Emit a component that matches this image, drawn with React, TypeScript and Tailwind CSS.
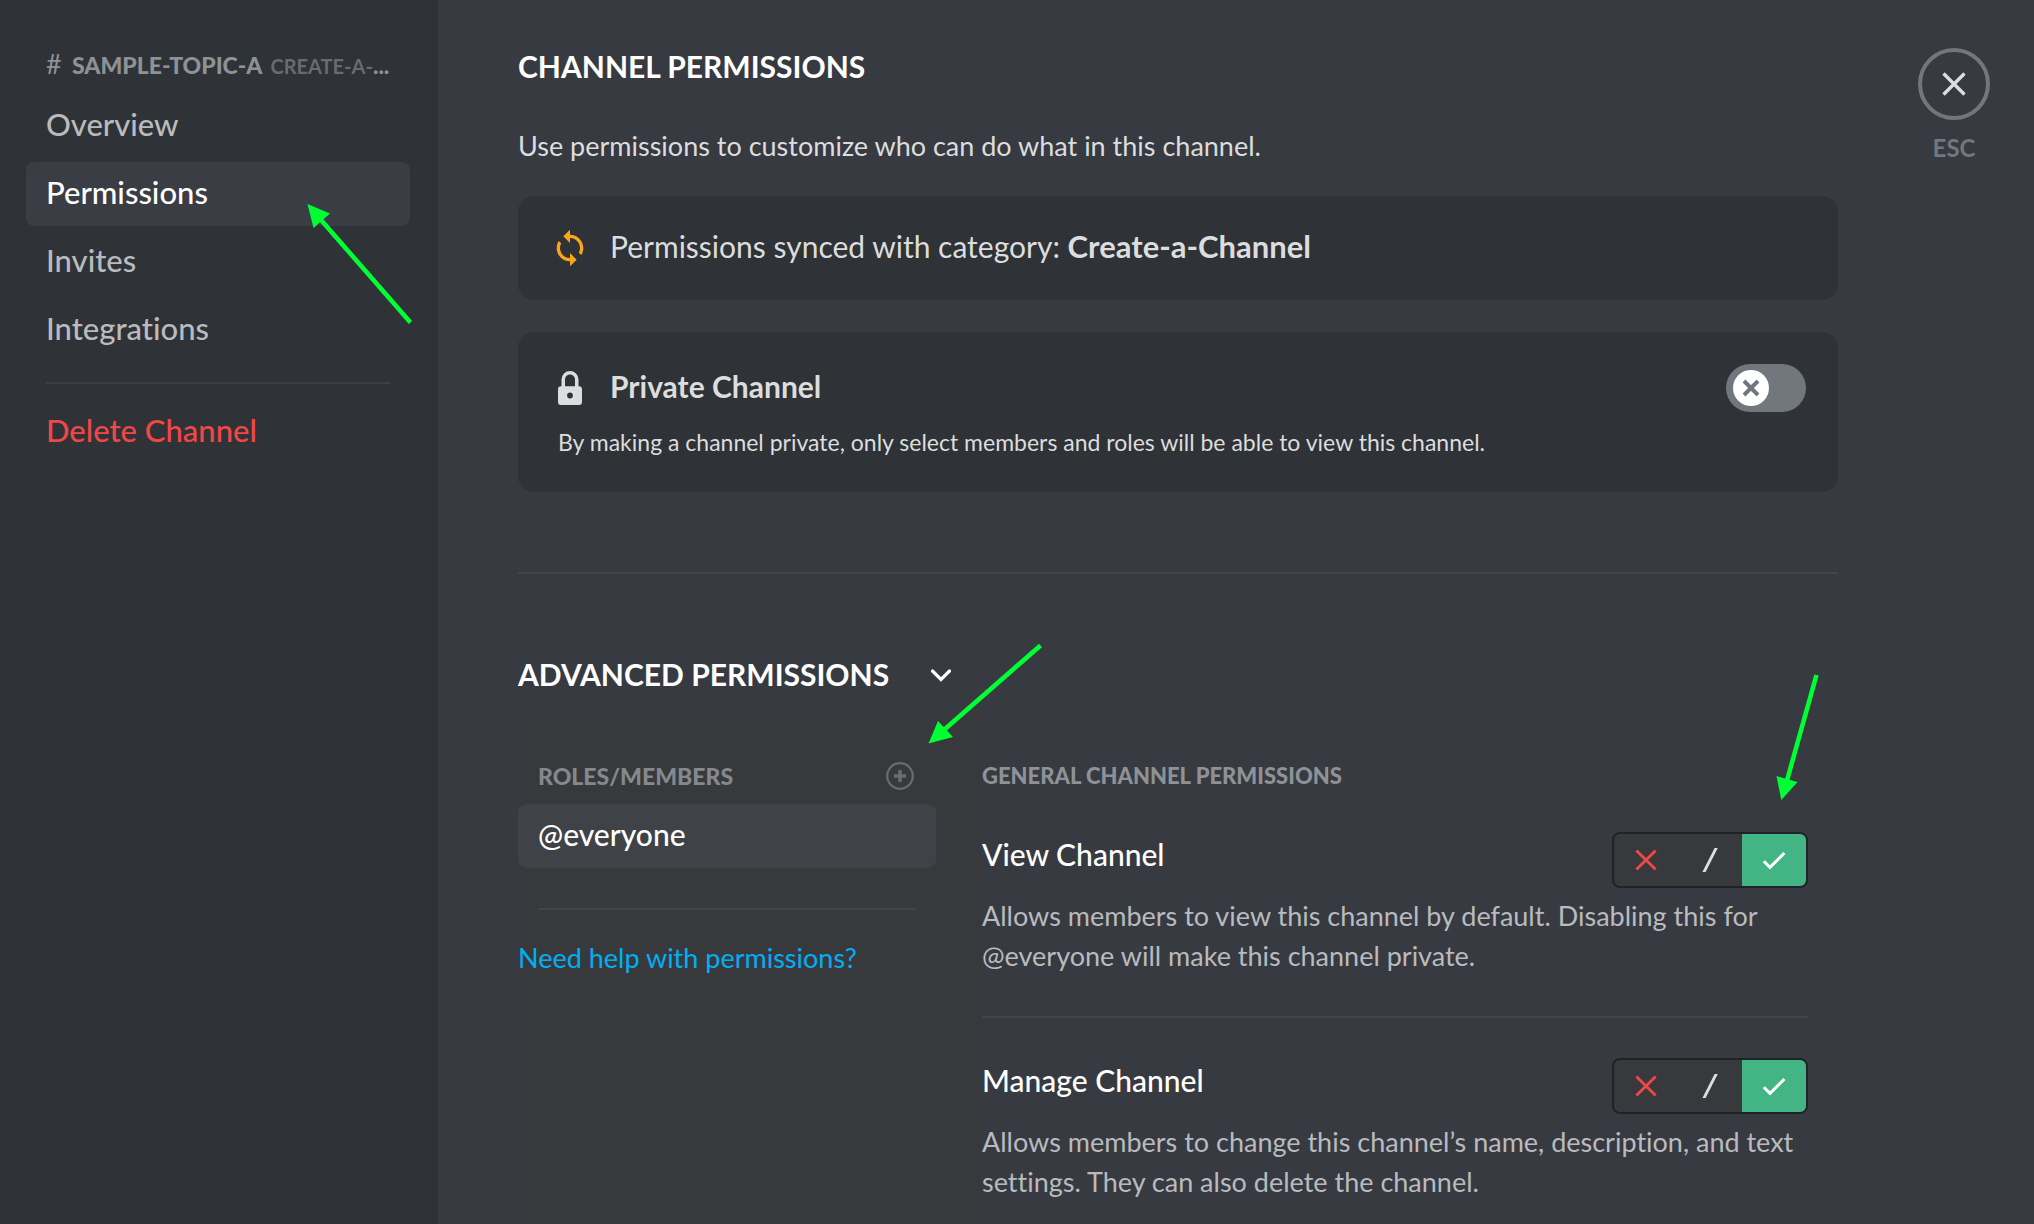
import { useState } from "react";

type Setting = "deny" | "inherit" | "allow";

const navItems = ["Overview", "Permissions", "Invites", "Integrations"];

const permissions = [
  {
    id: "view-channel",
    name: "View Channel",
    description:
      "Allows members to view this channel by default. Disabling this for @everyone will make this channel private.",
  },
  {
    id: "manage-channel",
    name: "Manage Channel",
    description:
      "Allows members to change this channel’s name, description, and text settings. They can also delete the channel.",
  },
];

function SyncIcon() {
  return (
    <svg viewBox="0 0 24 24" className="size-10 shrink-0 text-[#faa61a]" fill="currentColor" aria-hidden="true">
      <path d="M12 4V1L8 5l4 4V6c3.31 0 6 2.69 6 6 0 1.01-.25 1.97-.7 2.8l1.46 1.46C19.54 15.03 20 13.57 20 12c0-4.42-3.58-8-8-8zm0 14c-3.31 0-6-2.69-6-6 0-1.01.25-1.97.7-2.8L5.24 7.74C4.46 8.97 4 10.43 4 12c0 4.42 3.58 8 8 8v3l4-4-4-4v3z" />
    </svg>
  );
}

function LockIcon() {
  return (
    <svg viewBox="0 0 24 34" className="h-[34px] w-6 text-[#dcddde]" fill="currentColor" aria-hidden="true">
      <path
        fillRule="evenodd"
        d="M3.5 15.2V8.5a8.5 8.5 0 0 1 17 0v6.7h.5a3 3 0 0 1 3 3V31a3 3 0 0 1-3 3H3a3 3 0 0 1-3-3V18.2a3 3 0 0 1 3-3ZM7 15.2h10V8.5a5 5 0 0 0-10 0ZM12 21.6a2.9 2.9 0 1 0 0 5.8 2.9 2.9 0 0 0 0-5.8Z"
      />
    </svg>
  );
}

function CrossIcon({ className }: { className: string }) {
  return (
    <svg viewBox="0 0 24 24" className={className} fill="none" stroke="currentColor" strokeWidth="3.4" aria-hidden="true">
      <path d="M1.5 1.5 22.5 22.5M22.5 1.5 1.5 22.5" />
    </svg>
  );
}

function PermissionSwitch({ id, name }: { id: string; name: string }) {
  const [value, setValue] = useState<Setting>("allow");
  const options: { key: Setting; label: string; tone: string; active: string }[] = [
    { key: "deny", label: "Deny", tone: "text-[#f04747]", active: "bg-[#f04747] text-white" },
    { key: "inherit", label: "Inherit", tone: "text-[#dcddde]", active: "bg-[#72767d] text-white" },
    { key: "allow", label: "Allow", tone: "text-[#43b581]", active: "bg-[#43b484] text-white" },
  ];
  return (
    <div
      role="radiogroup"
      aria-label={name}
      className="flex h-14 w-49 shrink-0 overflow-hidden rounded-lg border-2 border-[#212226] bg-[#38393d]"
    >
      {options.map((o) => (
        <label
          key={o.key}
          className={`relative flex flex-1 cursor-pointer items-center justify-center ${value === o.key ? o.active : o.tone}`}
        >
          <input
            type="radio"
            name={id}
            aria-label={o.label}
            checked={value === o.key}
            onChange={() => setValue(o.key)}
            className="absolute inset-0 cursor-pointer appearance-none"
          />
          {o.key === "deny" && (
            <svg viewBox="0 0 32 32" className="size-8" fill="none" stroke="currentColor" strokeWidth="2.8" aria-hidden="true">
              <path d="M6.4 6.4 25.6 25.6M25.6 6.4 6.4 25.6" />
            </svg>
          )}
          {o.key === "inherit" && (
            <svg viewBox="0 0 32 32" className="size-8" fill="currentColor" aria-hidden="true">
              <path d="M20.6 4h3.2L11.6 28H8.4Z" />
            </svg>
          )}
          {o.key === "allow" && (
            <svg viewBox="0 0 32 32" className="size-8" fill="none" stroke="currentColor" strokeWidth="3" aria-hidden="true">
              <path d="M5.8 17.2 12 23.4 26.4 9" />
            </svg>
          )}
        </label>
      ))}
    </div>
  );
}

function Sidebar() {
  return (
    <aside className="flex w-[438px] shrink-0 flex-col bg-[#2f3236] pt-11 pr-7 pl-[26px]">
      <h2 className="flex items-baseline px-5 text-[23px] leading-10 font-black whitespace-nowrap text-[#8e9297]">
        <span className="w-[26px] text-[27px] font-normal">#</span>
        SAMPLE-TOPIC-A
        <span className="ml-2 text-xl leading-10 font-bold text-[#686b71]">CREATE-A-</span>...
      </h2>
      <nav className="mt-[8px] flex flex-col gap-1 text-[31px] leading-10 font-medium">
        {navItems.map((item) => (
          <a
            key={item}
            href={`#${item.toLowerCase()}`}
            aria-current={item === "Permissions" ? "page" : undefined}
            className={
              item === "Permissions"
                ? "flex h-16 items-center rounded-lg bg-[#3a3d44] px-5 pb-1 text-white"
                : "flex h-16 items-center rounded-lg px-5 pb-1 text-[#b9bbbe]"
            }
          >
            {item}
          </a>
        ))}
      </nav>
      <hr className="mx-5 mt-5 mb-4 border-t-2 border-[#3d3e44]" />
      <button type="button" className="flex h-16 items-center px-5 pb-1 text-[31px] leading-10 font-medium text-[#f04747]">
        Delete Channel
      </button>
    </aside>
  );
}

function Arrows() {
  return (
    <svg className="pointer-events-none absolute inset-0 size-full" fill="#00ff33" stroke="#00ff33" aria-hidden="true">
      <path stroke="none" d="M307.5 204 330 213.5 313.5 228Z" />
      <path strokeWidth="4.6" d="M318 216.5 410.5 322.5" />
      <path stroke="none" d="M928.5 743.5 938 721 953 737Z" />
      <path strokeWidth="4.6" d="M941 732.5 1040.5 645.5" />
      <path stroke="none" d="M1781.3 800 1776.5 776 1797.5 782Z" />
      <path strokeWidth="4.6" d="M1786 784 1816.5 675" />
    </svg>
  );
}

export default function App() {
  const [isPrivate, setIsPrivate] = useState(false);
  return (
    <div className="relative flex min-h-screen bg-[#373a41] font-[Lato,'Noto_Sans',sans-serif] text-[#dcddde] [font-variant-ligatures:none]">
      <Sidebar />
      <main className="flex min-w-0 flex-1 pl-20">
        <div className="flex min-w-0 flex-1 flex-col">
          <h1 className="mt-[46px] text-[30px] leading-10 font-bold text-white">CHANNEL PERMISSIONS</h1>
          <p className="mt-10 text-[27px] leading-10">Use permissions to customize who can do what in this channel.</p>

          <section className="mt-[30px] flex h-26 items-center rounded-2xl bg-[#2f3236] px-8">
            <SyncIcon />
            <p className="ml-5 pb-1 text-[30px] leading-10">
              Permissions synced with category: <strong className="text-[31px] font-bold">Create-a-Channel</strong>
            </p>
          </section>

          <section className="mt-8 h-40 rounded-2xl bg-[#2f3236] px-8 pt-8">
            <div className="flex h-12 items-center">
              <span className="flex w-10 justify-center">
                <LockIcon />
              </span>
              <h2 className="ml-5 flex-1 pb-1 text-[30px] leading-10 font-bold">Private Channel</h2>
              <label
                className={`relative flex h-12 w-20 cursor-pointer items-center rounded-full px-[7px] ${isPrivate ? "justify-end bg-[#43b581] text-[#43b581]" : "bg-[#72767d] text-[#72767d]"}`}
              >
                <input
                  type="checkbox"
                  role="switch"
                  aria-label="Private Channel"
                  checked={isPrivate}
                  onChange={(e) => setIsPrivate(e.target.checked)}
                  className="absolute inset-0 cursor-pointer appearance-none"
                />
                <span className="flex size-9 items-center justify-center rounded-full bg-white">
                  <svg viewBox="0 0 18 18" className="size-[18px]" fill="none" stroke="currentColor" strokeWidth="4" aria-hidden="true">
                    <path d="M2 2 16 16M16 2 2 16" />
                  </svg>
                </span>
              </label>
            </div>
            <p className="mt-[10px] pl-2 text-[23px] leading-10">
              By making a channel private, only select members and roles will be able to view this channel.
            </p>
          </section>

          <hr className="mt-20 border-t-2 border-[#42454a]" />

          <button
            type="button"
            aria-expanded="true"
            className="mt-20 mb-3 flex h-11 items-center gap-10 self-start text-[30px] leading-10 font-bold text-white"
          >
            <span className="pb-1">ADVANCED PERMISSIONS</span>
            <svg viewBox="0 0 24 24" className="size-6" fill="none" stroke="currentColor" strokeWidth="3.2" strokeLinecap="round" aria-hidden="true">
              <path d="M3.5 7 12 15.500l8.500-8.500" />
            </svg>
          </button>

          <div className="flex flex-1">
            <section className="flex w-116 shrink-0 flex-col bg-[#38393d] pt-[46px] pr-[46px]">
              <div className="flex h-10 items-center justify-between px-5">
                <h3 className="text-[23px] leading-10 font-black text-[#85888d]">ROLES/MEMBERS</h3>
                <button type="button" aria-label="Add members or roles" className="mr-[2px] text-[#696b70]">
                  <svg viewBox="0 0 28 28" className="size-7" fill="none" stroke="currentColor" aria-hidden="true">
                    <circle cx="14" cy="14" r="12.8" strokeWidth="2.2" />
                    <path strokeWidth="3.6" d="M14 8v12M8 14h12" />
                  </svg>
                </button>
              </div>
              <button
                type="button"
                className="mt-2 flex h-16 items-center rounded-lg bg-[#3f4246] px-5 pb-1 text-[30px] leading-10 font-medium text-white"
              >
                @everyone
              </button>
              <hr className="mx-5 mt-10 border-t-2 border-[#434448]" />
              <a href="#help" className="mt-7 self-start text-[27px] leading-10 text-[#00aff4]">
                Need help with permissions?
              </a>
            </section>

            <section className="min-w-0 flex-1 pt-[46px] pr-[30px]">
              <h3 className="text-[22px] leading-10 font-black text-[#8e9297]">GENERAL CHANNEL PERMISSIONS</h3>
              <div className="mt-9 flex flex-col gap-10">
                {permissions.map((p, i) => (
                  <div key={p.id} className={i < permissions.length - 1 ? "border-b-2 border-[#42454a] pb-10" : ""}>
                    <div className="flex h-14 items-start justify-between">
                      <h4 className="text-[30px] leading-11 font-medium text-white">{p.name}</h4>
                      <PermissionSwitch id={p.id} name={p.name} />
                    </div>
                    <p className="mt-2 text-[27px] leading-10 text-[#b9bbbe]">{p.description}</p>
                  </div>
                ))}
              </div>
            </section>
          </div>
        </div>

        <div className="flex w-49 shrink-0 flex-col items-center pt-12 pl-9">
          <button
            type="button"
            aria-label="Close"
            className="flex size-18 items-center justify-center rounded-full border-4 border-[#72767d] text-[#dcddde]"
          >
            <CrossIcon className="size-6" />
          </button>
          <span className="mt-2 text-2xl leading-10 font-bold text-[#72767d]">ESC</span>
        </div>
      </main>
      <Arrows />
    </div>
  );
}
